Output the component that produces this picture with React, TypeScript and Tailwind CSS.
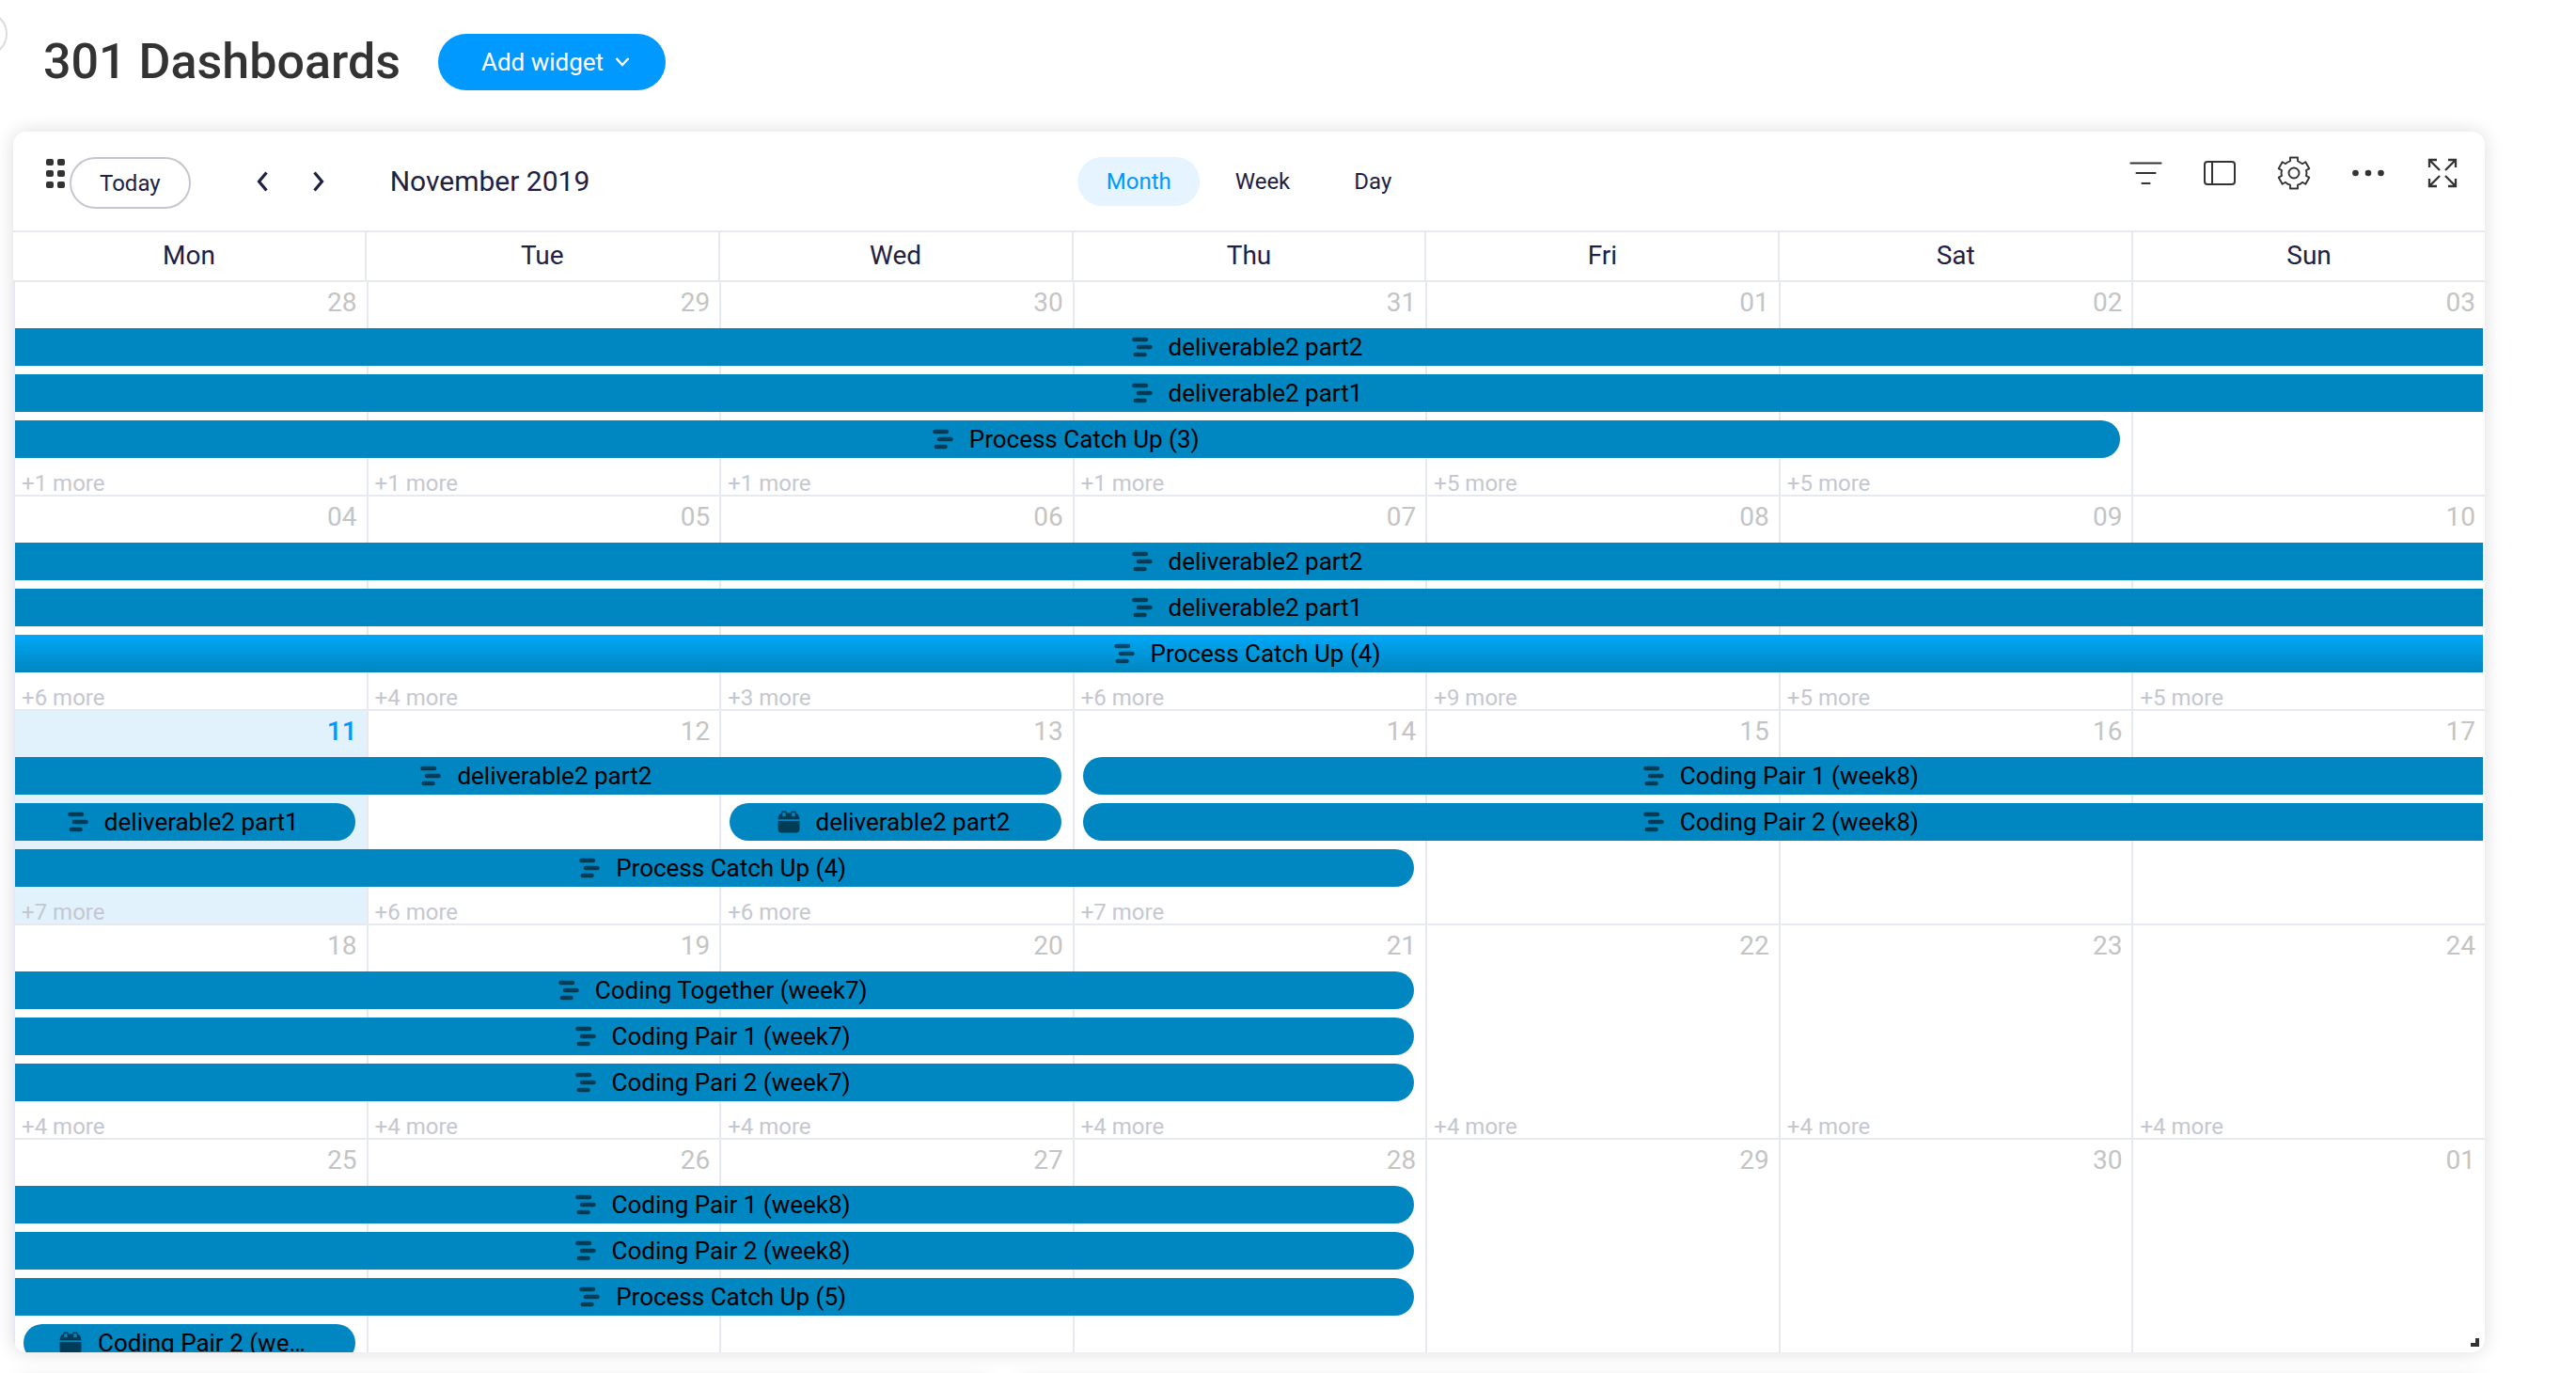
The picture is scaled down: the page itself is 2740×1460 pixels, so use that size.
import React from "react";

type Kind = "timeline" | "date";

interface CalendarEvent {
  title: string;
  from: number;
  to: number;
  lane: number;
  kind?: Kind;
  continuesBefore?: boolean;
  continuesAfter?: boolean;
  hovered?: boolean;
}

interface Week {
  days: string[];
  today?: number;
  more: (number | null)[];
  events: CalendarEvent[];
}

const WEEKDAYS = ["Mon", "Tue", "Wed", "Thu", "Fri", "Sat", "Sun"];

const WEEKS: Week[] = [
  {
    days: ["28", "29", "30", "31", "01", "02", "03"],
    more: [1, 1, 1, 1, 5, 5, null],
    events: [
      { title: "deliverable2 part2", from: 1, to: 8, lane: 1, continuesBefore: true, continuesAfter: true },
      { title: "deliverable2 part1", from: 1, to: 8, lane: 2, continuesBefore: true, continuesAfter: true },
      { title: "Process Catch Up (3)", from: 1, to: 7, lane: 3, continuesBefore: true },
    ],
  },
  {
    days: ["04", "05", "06", "07", "08", "09", "10"],
    more: [6, 4, 3, 6, 9, 5, 5],
    events: [
      { title: "deliverable2 part2", from: 1, to: 8, lane: 1, continuesBefore: true, continuesAfter: true },
      { title: "deliverable2 part1", from: 1, to: 8, lane: 2, continuesBefore: true, continuesAfter: true },
      { title: "Process Catch Up (4)", from: 1, to: 8, lane: 3, continuesBefore: true, continuesAfter: true, hovered: true },
    ],
  },
  {
    days: ["11", "12", "13", "14", "15", "16", "17"],
    today: 0,
    more: [7, 6, 6, 7, null, null, null],
    events: [
      { title: "deliverable2 part2", from: 1, to: 4, lane: 1, continuesBefore: true },
      { title: "Coding Pair 1 (week8)", from: 4, to: 8, lane: 1, continuesAfter: true },
      { title: "deliverable2 part1", from: 1, to: 2, lane: 2, continuesBefore: true },
      { title: "deliverable2 part2", from: 3, to: 4, lane: 2, kind: "date" },
      { title: "Coding Pair 2 (week8)", from: 4, to: 8, lane: 2, continuesAfter: true },
      { title: "Process Catch Up (4)", from: 1, to: 5, lane: 3, continuesBefore: true },
    ],
  },
  {
    days: ["18", "19", "20", "21", "22", "23", "24"],
    more: [4, 4, 4, 4, 4, 4, 4],
    events: [
      { title: "Coding Together (week7)", from: 1, to: 5, lane: 1, continuesBefore: true },
      { title: "Coding Pair 1 (week7)", from: 1, to: 5, lane: 2, continuesBefore: true },
      { title: "Coding Pari 2 (week7)", from: 1, to: 5, lane: 3, continuesBefore: true },
    ],
  },
  {
    days: ["25", "26", "27", "28", "29", "30", "01"],
    more: [null, null, null, null, null, null, null],
    events: [
      { title: "Coding Pair 1 (week8)", from: 1, to: 5, lane: 1, continuesBefore: true },
      { title: "Coding Pair 2 (week8)", from: 1, to: 5, lane: 2, continuesBefore: true },
      { title: "Process Catch Up (5)", from: 1, to: 5, lane: 3, continuesBefore: true },
      { title: "Coding Pair 2 (week7)", from: 1, to: 2, lane: 4, kind: "date" },
    ],
  },
];

function TimelineIcon() {
  return (
    <svg viewBox="0 0 22 22" className="size-[22px] shrink-0 opacity-55" stroke="#000" strokeWidth="4.6" strokeLinecap="round" aria-hidden="true">
      <path d="M2.5 3h12.500M7 11h12.500M3.800 19h9.700" />
    </svg>
  );
}

function DateIcon() {
  return (
    <svg viewBox="0 0 24 24" className="size-6 shrink-0 opacity-55" aria-hidden="true">
      <path fillRule="evenodd" d="M.5 9.300C.8 5.500 2.300 3.300 4 2.700L4.800.500H9.200L10 2.500H14L14.800.500H19.200L20 2.700C21.700 3.300 23.200 5.500 23.500 9.300ZM5.300 2.200V6.200H8.700V2.200ZM15.300 2.200V6.200H18.700V2.200Z" />
      <path d="M.5 11h23v8.500a4 4 0 0 1-4 4h-15a4 4 0 0 1-4-4Z" />
    </svg>
  );
}

function EventBar({ event }: { event: CalendarEvent }) {
  return (
    <button
      type="button"
      style={{ gridColumn: `${event.from} / ${event.to}`, gridRow: event.lane }}
      className={[
        "flex h-10 min-w-0 items-center justify-center gap-[17px] pl-[38px] pr-[42px] text-[26px] leading-10 text-black",
        event.continuesBefore ? "" : "ml-[9px] rounded-l-full",
        event.continuesAfter ? "mr-1" : "mr-[14px] rounded-r-full",
        event.hovered ? "bg-linear-to-b from-[#00a8f7] to-[#0086c0]" : "bg-[#0086c0]",
      ].join(" ")}
    >
      {event.kind === "date" ? <DateIcon /> : <TimelineIcon />}
      <span className="truncate">{event.title}</span>
    </button>
  );
}

function WeekRow({ week }: { week: Week }) {
  return (
    <div className="relative h-[228px] border-b-2 border-[#e6e9ef]">
      <div className="grid h-full grid-cols-7">
        {week.days.map((day, i) => (
          <div
            key={i}
            className={
              "flex flex-col justify-between border-r-2 border-[#e6e9ef] " +
              (week.today === i ? "bg-[#e1f2fd]" : "")
            }
          >
            <span
              className={
                "pr-[10px] text-right text-[28px] leading-[44px] " +
                (week.today === i ? "font-medium text-[#0099ff]" : "text-[#c4c4c4]")
              }
            >
              {day}
            </span>
            {week.more[i] !== null && (
              <button type="button" className="self-start pl-[7px] text-2xl leading-6 text-[#c5c7d0]">
                +{week.more[i]} more
              </button>
            )}
          </div>
        ))}
      </div>
      <div className="pointer-events-none absolute inset-x-0 top-[49px] grid grid-cols-7 gap-y-[9px]">
        {week.events.map((event, i) => (
          <EventBar key={i} event={event} />
        ))}
      </div>
    </div>
  );
}

function ToolbarIcons() {
  return (
    <div className="flex items-center gap-[39px] text-[#333]">
      <button type="button" aria-label="Filter">
        <svg viewBox="0 0 40 40" className="size-10" stroke="currentColor" strokeWidth="2.200" strokeLinecap="round">
          <path d="M4.500 9.500h32M10.500 20h20M16.500 31h8" />
        </svg>
      </button>
      <button type="button" aria-label="Toggle panel">
        <svg viewBox="0 0 40 40" className="size-10" fill="none" stroke="currentColor" strokeWidth="2">
          <rect x="4" y="8" width="32" height="24" rx="3" />
          <path d="M12 8v24" />
        </svg>
      </button>
      <button type="button" aria-label="Settings">
        <svg viewBox="0 0 40 40" className="size-10" fill="none" stroke="currentColor" strokeWidth="1.900" strokeLinejoin="round">
          <path d="M24 3.500V7.300L29 10.200 32.300 8.300 36.300 15.200 33 17.100Q34 20 33 22.900L36.300 24.800 32.300 31.700 29 29.800Q27 31.900 24 32.700V36.500H16V32.700Q13 31.900 11 29.800L7.700 31.700 3.700 24.800 7 22.900Q6 20 7 17.100L3.700 15.200 7.700 8.300 11 10.200Q13 8.100 16 7.300V3.500Z" />
          <circle cx="20" cy="20" r="5.500" />
        </svg>
      </button>
      <button type="button" aria-label="More options">
        <svg viewBox="0 0 40 40" className="size-10" fill="currentColor">
          <circle cx="6.500" cy="20" r="3.300" />
          <circle cx="20" cy="20" r="3.300" />
          <circle cx="33.500" cy="20" r="3.300" />
        </svg>
      </button>
      <button type="button" aria-label="Full screen">
        <svg viewBox="0 0 40 40" className="size-10" fill="none" stroke="currentColor" strokeWidth="2.300">
          <path d="M17 17 6.500 6.500M6 14V6h8M23 17 33.500 6.500M26 6h8v8M17 23 6.500 33.500M6 26v8h8M23 23l10.500 10.500M34 26v8h-8" />
        </svg>
      </button>
    </div>
  );
}

export default function App() {
  return (
    <div className="relative h-screen overflow-hidden bg-white font-[Roboto,sans-serif] text-[#1f2143]">
      <button
        type="button"
        aria-label="Toggle sidebar"
        className="absolute -left-10 top-3 size-12 rounded-full border-2 border-[#dcdcdc]"
      />
      <header className="flex h-[140px] items-start pl-[46px] pt-9">
        <h1 className="text-[52px] font-medium leading-[60px] text-[#333]">301 Dashboards</h1>
        <button
          type="button"
          className="ml-10 flex h-[60px] items-center gap-3 rounded-full bg-[#0099ff] pl-[46px] pr-[38px] text-[26px] text-white"
        >
          Add widget
          <svg viewBox="0 0 16 12" className="h-3 w-4" fill="none" stroke="currentColor" strokeWidth="2.400" aria-hidden="true">
            <path d="m1.500 2 6.500 7 6.500-7" />
          </svg>
        </button>
      </header>

      <main className="relative ml-[14px] mr-[97px] flex h-[1298px] flex-col overflow-hidden rounded-[14px] shadow-[0_0_20px_rgba(0,0,0,0.14)]">
        <div className="relative flex h-[107px] shrink-0 items-center justify-between border-b-2 border-[#e6e9ef] pl-[34px] pr-[25px]">
          <div className="flex items-center">
            <svg viewBox="0 0 22 34" className="mr-1 mb-4 h-[34px] w-[22px]" fill="#333" aria-hidden="true">
              <rect x="1" y="1" width="8" height="7" rx="2" />
              <rect x="13" y="1" width="8" height="7" rx="2" />
              <rect x="1" y="13" width="8" height="7" rx="2" />
              <rect x="13" y="13" width="8" height="7" rx="2" />
              <rect x="1" y="25" width="8" height="7" rx="2" />
              <rect x="13" y="25" width="8" height="7" rx="2" />
            </svg>
            <button type="button" className="mt-1 h-[55px] rounded-full border-2 border-[#c5c7d0] px-[30px] text-2xl">
              Today
            </button>
            <button type="button" aria-label="Previous month" className="ml-[69px]">
              <svg viewBox="0 0 14 22" className="h-[22px] w-[14px]" fill="none" stroke="currentColor" strokeWidth="3.200">
                <path d="M11.500 1.500 3.500 11l8 9.500" />
              </svg>
            </button>
            <button type="button" aria-label="Next month" className="ml-[46px]">
              <svg viewBox="0 0 14 22" className="h-[22px] w-[14px]" fill="none" stroke="currentColor" strokeWidth="3.200">
                <path d="m2.500 1.500 8 9.500-8 9.500" />
              </svg>
            </button>
            <h2 className="ml-[69px] text-[30px]">November 2019</h2>
          </div>
          <nav className="absolute left-1/2 flex -translate-x-1/2 gap-[6px] text-2xl leading-[52px]" aria-label="Calendar view">
            <button type="button" className="rounded-full bg-[#e5f4ff] px-[31px] text-[#0099ff]">
              Month
            </button>
            <button type="button" className="rounded-full px-[31px]">Week</button>
            <button type="button" className="rounded-full px-[31px]">Day</button>
          </nav>
          <div className="mb-[17px]">
            <ToolbarIcons />
          </div>
        </div>

        <div className="-mr-[2px] grid h-[53px] shrink-0 grid-cols-7 border-b-2 border-[#e6e9ef] text-center text-[28px] leading-[50px]">
          {WEEKDAYS.map((name) => (
            <div key={name} className="border-r-2 border-[#e6e9ef]">
              {name}
            </div>
          ))}
        </div>

        <div className="-mr-[2px] min-h-0 flex-1 overflow-hidden border-l-2 border-[#e6e9ef]">
          {WEEKS.map((week, i) => (
            <WeekRow key={i} week={week} />
          ))}
        </div>

        <span className="absolute bottom-[6px] right-[6px] size-[9px] border-b-4 border-r-4 border-[#333]" aria-hidden="true" />
      </main>

      <div className="ml-[14px] mr-[97px] mt-[30px] grid grid-cols-[2fr_3fr] gap-5">
        <section className="h-20 rounded-[14px] shadow-[0_0_20px_rgba(0,0,0,0.14)]" aria-label="Left widget" />
        <section className="h-20 rounded-[14px] shadow-[0_0_20px_rgba(0,0,0,0.14)]" aria-label="Right widget" />
      </div>
    </div>
  );
}
